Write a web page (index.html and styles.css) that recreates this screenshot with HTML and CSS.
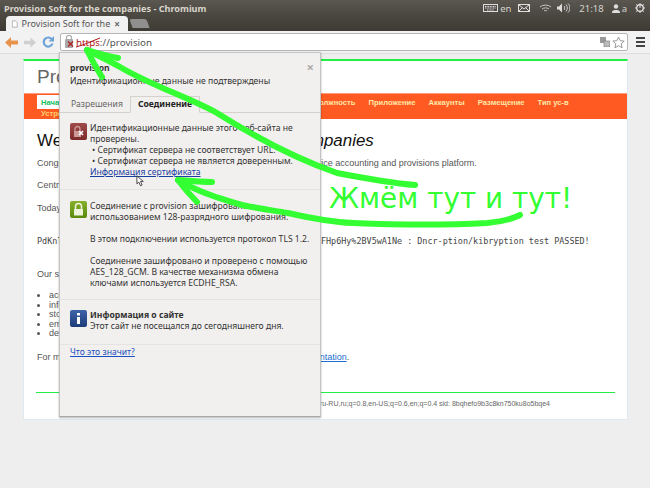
FILE: index.html
```html
<!DOCTYPE html>
<html lang="ru">
<head>
    <meta charset="UTF-8">
    <title>Provision Soft for the companies - Chromium</title>
    <link rel="stylesheet" href="styles.css">
</head>
<body>

    <div class="panel">
        <span class="panel-title">Provision Soft for the companies - Chromium</span>
        <div class="tray">
            <svg class="kbd" width="15" height="8" viewBox="0 0 15 8"><rect x="0.5" y="0.5" width="14" height="7" fill="none" stroke="#ddd"/><path d="M2 2.500h11M2 4h11M4 6h7" stroke="#ddd" stroke-dasharray="1 .6"/></svg>
            <span class="tray-lang">en</span>
            <svg class="mail" width="12" height="8" viewBox="0 0 12 8"><rect x="0.5" y="0.5" width="11" height="7" fill="none" stroke="#ddd"/><path d="M1 1l5 4 5-4M1 7l3.500-3.500M11 7L7.500 3.500" fill="none" stroke="#ddd"/></svg>
            <svg class="wifi" width="13" height="9" viewBox="0 0 13 9"><path d="M1 3c3-2.500 8-2.500 11 0M3 5c2-1.500 5-1.500 7 0M5 7c1-.7 2-.7 3 0" fill="none" stroke="#ccc"/></svg>
            <svg class="sound" width="13" height="10" viewBox="0 0 13 10"><path d="M0 3.500h2l3-3v9l-3-3H0z" fill="#ddd"/><path d="M7 3c1 1 1 3 0 4M9 1.500c1.800 2 1.800 5 0 7M11 .5c2.500 2.500 2.500 6.500 0 9" fill="none" stroke="#ccc"/></svg>
            <span class="tray-time">21:18</span>
            <svg class="user" width="8" height="9" viewBox="0 0 8 9"><circle cx="4" cy="2.500" r="2.200" fill="#ddd"/><path d="M0 9c0-3 2-3 4-3s4 0 4 3z" fill="#ddd"/></svg>
            <span class="tray-user">a</span>
            <svg class="power" width="10" height="10" viewBox="0 0 10 10"><circle cx="5" cy="5" r="3.300" fill="none" stroke="#ddd" stroke-width="1.400"/><path d="M5 0v5M0 5h1.500M8.500 5H10M1.300 1.300l1 1M7.700 2.300l1-1M1.300 8.700l1-1M7.700 7.700l1 1M5 8.500V10" stroke="#ddd"/></svg>
        </div>
    </div>

    <div class="tabstrip">
        <div class="tab">
            <svg width="8" height="10" viewBox="0 0 8 10"><path d="M.5.500h4.500l2.500 2.500v6.500h-7z" fill="#fff" stroke="#999"/></svg>
            <span class="tab-title">Provision Soft for the</span>
            <span class="tab-close">×</span>
        </div>
        <div class="tab-new"></div>
    </div>

    <div class="toolbar">
        <svg class="nav-back" width="13" height="11" viewBox="0 0 13 11"><path d="M6 0L0 5.500 6 11V7.500h7v-4H6z" fill="#e8944f"/></svg>
        <svg class="nav-forward" width="12" height="11" viewBox="0 0 13 11"><path d="M7 0l6 5.500L7 11V7.500H0v-4h7z" fill="#cfcfcf"/></svg>
        <svg class="nav-reload" width="12" height="12" viewBox="0 0 12 12"><path d="M10 3.500A4.500 4.500 0 1 0 10.500 7.500" fill="none" stroke="#6ea3d8" stroke-width="2.200"/><path d="M12 0v5.500H6.500z" fill="#6ea3d8"/></svg>
        <div class="omnibox">
            <svg class="omni-lock" width="11" height="14" viewBox="0 0 11 14"><rect x="0" y="4" width="8" height="9" rx="1" fill="#aaa"/><path d="M1.500 4V2.500a2.500 2 0 0 1 5 0V4" fill="none" stroke="#aaa" stroke-width="1.200"/><path d="M3 6.500l5 5M8 6.500l-5 5" stroke="#b02020" stroke-width="1.300"/></svg>
            <span class="omni-scheme">https</span><span class="omni-rest">://provision</span>
            <svg class="omni-translate" width="10" height="10" viewBox="0 0 10 10"><rect x="0" y="0" width="6" height="6" fill="#999"/><rect x="4" y="4" width="6" height="6" fill="#bbb" stroke="#777" stroke-width=".6"/></svg>
            <svg class="omni-star" width="13" height="13" viewBox="0 0 13 13"><path d="M6.500 1l1.700 3.700 4 .4-3 2.700.9 4-3.600-2.100-3.600 2.100.9-4-3-2.700 4-.4z" fill="#fff" stroke="#999"/></svg>
        </div>
        <div class="menu-btn"><span></span><span></span><span></span></div>
    </div>

    <div class="viewport">
        <div class="card">
            <div class="header">
                <h1 class="logo">Provision</h1>
            </div>
            <div class="mainmenu">
                <span class="active">Начало</span>
                <span class="hidden-item">Компании</span>
                <span class="hidden-item">Отдел</span>
                <span>Должность</span>
                <span>Приложение</span>
                <span>Аккаунты</span>
                <span>Размещение</span>
                <span>Тип ус-в</span>
                <span class="second">Устройства</span>
            </div>
            <div class="content">
                <h2>Welcome to <i>Provision Soft for the companies</i></h2>
                <p class="intro">Congratulations! You have successfully installed Provision Soft, the device accounting and provisions platform.</p>
                <p class="line-central">Central server is running.</p>
                <p class="line-today">Today is a good day to test.</p>
                <pre class="test">PdKnlQ8sWz3Rt0Yb5nVcXa1LkJhGf7DsEp9uI2oT+mNbVqZrCyQw7TeuFHp6Hy%2BV5wA1Ne : Dncr-ption/kibryption test PASSED!</pre>
                <p class="line-our">Our site can:</p>
                <ul>
                    <li>accounting</li>
                    <li>information</li>
                    <li>storage</li>
                    <li>email</li>
                    <li>devices</li>
                </ul>
                <p class="line-more">For more information on device accounting and provisions see <a href="#">documentation</a>.</p>
                <div class="footer">
                    <span>Server: provision accept-language=ru-RU,ru;q=0.8,en-US;q=0.6,en;q=0.4 sid: 8bqhefo9b3c8kn750ku8o5bqe4</span>
                </div>
            </div>
        </div>
    </div>

    <div class="popup">
        <span class="popup-close">×</span>
        <div class="popup-head">
            <b>provision</b>
            <div>Идентификационные данные не подтверждены</div>
        </div>
        <div class="popup-tabs">
            <span class="ptab">Разрешения</span>
            <span class="ptab ptab-on">Соединение</span>
        </div>
        <div class="psection psection-cert">
            <svg class="picon" width="17" height="17" viewBox="0 0 17 17"><defs><linearGradient id="redg" x1="0" y1="0" x2="0" y2="1"><stop offset="0" stop-color="#a04a4a"/><stop offset="1" stop-color="#7c2a2c"/></linearGradient></defs><rect width="17" height="17" rx="2" fill="url(#redg)"/><path d="M5 8V6a2.500 2.500 0 0 1 5 0v2" fill="none" stroke="#c99" stroke-width="1.300"/><rect x="4" y="8" width="7" height="6" fill="#c99"/><path d="M9 8l4 4M13 8l-4 4" stroke="#fff" stroke-width="1.600"/></svg>
            <div class="ptext">
                Идентификационные данные этого веб-сайта не проверены.
                <div class="pitem">• Сертификат сервера не соответствует URL.</div>
                <div class="pitem">• Сертификат сервера не является доверенным.</div>
                <a class="plink" href="#">Информация сертификата</a>
            </div>
        </div>
        <div class="psection psection-lock">
            <svg class="picon" width="17" height="17" viewBox="0 0 17 17"><defs><linearGradient id="greeng" x1="0" y1="0" x2="0" y2="1"><stop offset="0" stop-color="#86b02a"/><stop offset="1" stop-color="#5c8a0c"/></linearGradient></defs><rect width="17" height="17" rx="2" fill="url(#greeng)"/><path d="M5.500 8V5.500a3 3 0 0 1 6 0V8" fill="none" stroke="#eef3dc" stroke-width="1.500"/><rect x="4" y="8" width="9" height="6.500" rx=".5" fill="#eef3dc"/></svg>
            <div class="ptext">
                Соединение с provision зашифровано с использованием 128-разрядного шифрования.
                <p>В этом подключении используется протокол TLS 1.2.</p>
                <p>Соединение зашифровано и проверено с помощью AES_128_GCM. В качестве механизма обмена ключами используется ECDHE_RSA.</p>
            </div>
        </div>
        <div class="psection psection-info">
            <svg class="picon" width="17" height="17" viewBox="0 0 17 17"><defs><linearGradient id="blueg" x1="0" y1="0" x2="0" y2="1"><stop offset="0" stop-color="#3f64a8"/><stop offset="1" stop-color="#1c3a78"/></linearGradient></defs><rect width="17" height="17" rx="2" fill="url(#blueg)"/><rect x="7" y="3" width="3" height="2.500" fill="#fff"/><rect x="7" y="7" width="3" height="7" fill="#fff"/></svg>
            <div class="ptext">
                <b>Информация о сайте</b>
                <div>Этот сайт не посещался до сегодняшнего дня.</div>
            </div>
        </div>
        <div class="pfoot"><a href="#">Что это значит?</a></div>
    </div>

    <svg class="cursor" width="9" height="12" viewBox="0 0 11 15"><path d="M1 1v10l2.500-2 2 4.500 2-1-2-4.500h3.500z" fill="#fff" stroke="#222"/></svg>

    <svg class="scribble" width="650" height="488" viewBox="0 0 650 488">
        <path d="M76 47C84 45 92 41 100 38" stroke="#b01818" stroke-width="1" fill="none"/>
        <g fill="none" stroke="#33ff33" stroke-width="6" stroke-linecap="round" stroke-linejoin="round">
            <path d="M415 185C390 183 363 178 337 173C300 160 255 137 217 113C190 98 150 85 120 67C108 60 97 55 87 50"/>
            <path d="M87 50C97 53 108 56 118 58M87 50C91 58 96 68 102 77"/>
            <path d="M520 215C510 220 500 222 487 223C450 225 400 225 353 223C330 222 310 218 288 213C270 210 255 208 242 205C225 200 215 197 205 193C195 189 186 185 178 180"/>
            <path d="M178 180C190 181 202 182 212 182M178 180C184 188 190 195 197 202"/>
        </g>
    </svg>
    <div class="note">Жмём тут и тут!</div>

</body>
</html>
```

FILE: styles.css
```css
html, body {
    margin: 0;
    padding: 0;
    width: 650px;
    height: 488px;
    overflow: hidden;
}

body {
    position: relative;
    font-family: 'Noto Sans', sans-serif;
    background-color: #eeeeee;
    color: #333;
}

.panel {
    height: 16px;
    padding: 0 5px 0 4px;
    display: flex;
    align-items: center;
    justify-content: space-between;
    background-image: linear-gradient(#5a5650, #4a4741);
}

.panel-title {
    font-size: 9.100px;
    font-weight: bold;
    color: #d8d5cc;
    white-space: nowrap;
}

.tray {
    display: flex;
    align-items: center;
    font-size: 9.500px;
    color: #d5d3cc;
}

.tray-lang {
    margin: 0 7px 0 2px;
}

.wifi {
    margin-left: 9px;
}

.sound {
    margin-left: 5px;
}

.tray-time {
    margin: 0 8px 0 9px;
}

.tray-user {
    margin: 0 8px 0 2px;
}

.tabstrip {
    height: 15px;
    padding-left: 6px;
    display: flex;
    align-items: flex-end;
    background-image: linear-gradient(#4a4741, #3e3b35);
}

.tab {
    width: 122px;
    height: 15px;
    box-sizing: border-box;
    padding: 0 8px 0 6px;
    display: flex;
    align-items: center;
    gap: 4px;
    background-color: #f2f2f2;
    border-radius: 4px 4px 0 0;
    font-size: 9px;
    color: #555;
}

.tab-title {
    flex: 1;
    white-space: nowrap;
}

.tab-close {
    font-size: 10px;
    font-weight: bold;
    color: #666;
}

.tab-new {
    width: 17px;
    height: 9px;
    margin: 0 0 3px 3px;
    background-color: #8f8f8d;
    border-radius: 2px 2px 0 0;
    transform: skewX(20deg);
}

.toolbar {
    height: 23px;
    display: flex;
    align-items: center;
    background-color: #f2f2f2;
    border-bottom: 1px solid #dddddd;
    box-sizing: border-box;
}

.nav-back {
    margin-left: 5px;
}

.nav-forward {
    margin-left: 6px;
}

.nav-reload {
    margin-left: 6px;
}

.omnibox {
    width: 568px;
    height: 18px;
    margin-left: 6px;
    box-sizing: border-box;
    display: flex;
    align-items: center;
    background-color: #fff;
    border: 1px solid #b5b5b5;
    border-radius: 2px;
    font-size: 9.800px;
    padding: 0 2px 0 4px;
}

.omni-scheme {
    color: #b01818;
}

.omni-rest {
    flex: 1;
    color: #555;
}

.omni-translate {
    margin-right: 2px;
}

.menu-btn {
    margin-left: 8px;
    width: 9px;
    display: flex;
    flex-direction: column;
    gap: 2px;
}

.menu-btn span {
    height: 2px;
    background-color: #444;
}

.viewport {
    height: 434px;
    padding: 5px 22px 0 23px;
    box-sizing: border-box;
    overflow: hidden;
}

.card {
    height: 361px;
    box-sizing: border-box;
    background-color: #fff;
    border: 1px solid #dfe9f0;
    border-top: 2px solid #22ee44;
    font-family: 'Liberation Sans', sans-serif;
    overflow: hidden;
}

.header {
    height: 32px;
    padding-left: 13px;
    display: flex;
    align-items: center;
}

.logo {
    margin: 0;
    font-size: 19px;
    font-weight: normal;
    color: #666;
}

.mainmenu {
    height: 26px;
    box-sizing: border-box;
    padding: 3px 0 0 13px;
    display: flex;
    flex-wrap: wrap;
    column-gap: 13px;
    align-content: flex-start;
    background-color: #ff5a22;
    border-top: 1px solid #ff9a80;
    font-size: 7.600px;
    line-height: 11px;
    font-weight: bold;
    color: #ffe7a8;
}

.mainmenu .active {
    background-color: #fff;
    color: #12c060;
    margin: -2px 0 -1px;
    padding: 2px 4px 1px;
}

.mainmenu .hidden-item {
    width: 101px;
    overflow: hidden;
}

.mainmenu .second {
    flex-basis: 100%;
    padding-left: 4px;
    color: #ffcf70;
}

.content {
    padding: 0 12px 0 13px;
    font-size: 9px;
    color: #555;
}

.content h2 {
    margin: 12px 0 6px;
    font-size: 16.900px;
    line-height: 20px;
    font-weight: normal;
    color: #111;
}

.content p {
    margin: 0;
    line-height: 12px;
    white-space: nowrap;
}

.content .line-central {
    padding-top: 10px;
}

.content .line-today {
    padding-top: 11px;
}

.test {
    margin: 21px 0 0;
    height: 33px;
    font-family: 'DejaVu Sans Mono', monospace;
    font-size: 8.440px;
    line-height: 12px;
    color: #444;
    white-space: nowrap;
    overflow: hidden;
}

.content ul {
    margin: 11px 0 0;
    padding-left: 12px;
    line-height: 9.500px;
}

.content .line-more {
    padding-top: 12.500px;
}

.line-more a {
    color: #1c6fd0;
}

.footer {
    margin: 29px 0 0 -1px;
    padding: 5px 65px 0 0;
    display: flex;
    justify-content: flex-end;
    border-top: 1px solid #22ee44;
    font-size: 7px;
    line-height: 12px;
    color: #666;
    white-space: nowrap;
}

.popup {
    position: absolute;
    left: 59px;
    top: 52px;
    width: 262px;
    height: 365px;
    box-sizing: border-box;
    background-color: #f2f0ee;
    border: 1px solid #c4c4c4;
    border-bottom-color: #a8a8a8;
    box-shadow: 0 1px 2px rgba(0, 0, 0, 0.3);
    font-size: 8.600px;
    line-height: 11px;
    color: #333;
}

.popup-close {
    position: absolute;
    right: 6px;
    top: 9px;
    font-size: 13px;
    font-weight: bold;
    color: #aaa;
}

.popup-head {
    padding: 9px 10px 0 10px;
    line-height: 13px;
}

.popup-tabs {
    margin-top: 5px;
    padding-left: 4px;
    height: 19px;
    display: flex;
    align-items: flex-end;
    border-bottom: 1px solid #d4d0cc;
}

.ptab {
    padding: 2px 7px;
    color: #666;
}

.ptab-on {
    font-weight: bold;
    color: #222;
    margin-bottom: -1px;
    border: 1px solid #d4d0cc;
    border-bottom: 1px solid #f2f0ee;
}

.psection {
    display: flex;
    gap: 3px;
    padding: 10px 8px 11px 10px;
    border-bottom: 1px solid #e6e4e2;
}

.psection-lock {
    padding-top: 11px;
    padding-bottom: 10px;
}

.psection-info {
    padding-bottom: 12px;
}

.picon {
    flex: none;
}

.ptext {
    flex: 1;
}

.pitem {
    padding-left: 2px;
}

.plink {
    color: #1a3fa0;
    text-decoration: underline;
}

.ptext p {
    margin: 11px 0 0;
}

.pfoot {
    padding: 2px 10px;
}

.pfoot a {
    color: #1a4fc0;
}

.cursor {
    position: absolute;
    left: 136px;
    top: 175px;
}

.scribble {
    position: absolute;
    left: 0;
    top: 0;
}

.note {
    position: absolute;
    left: 329px;
    top: 179px;
    font-family: 'DejaVu Sans', sans-serif;
    font-size: 27.900px;
    line-height: 40px;
    color: #33ff33;
    white-space: nowrap;
}
```
